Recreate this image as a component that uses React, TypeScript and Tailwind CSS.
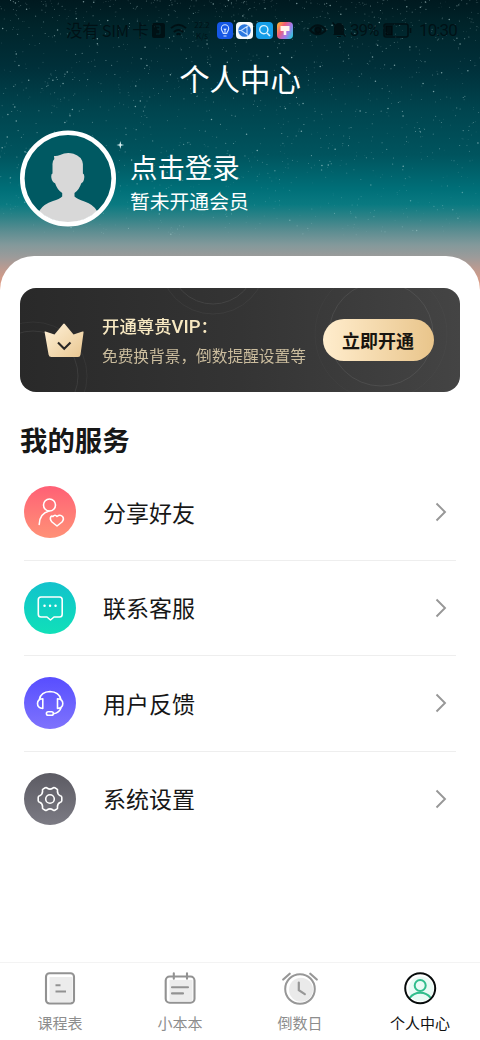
import type { ReactNode } from "react";

type Star = { x: number; y: number; r: number; o: number };

function makeStars(count: number): Star[] {
  let seed = 20231;
  const next = () => {
    seed = (seed * 16807) % 2147483647;
    return seed / 2147483647;
  };
  return Array.from({ length: count }, () => {
    const x = next() * 480;
    const y = Math.pow(next(), 1.45) * 235;
    const bright = next();
    return {
      x,
      y,
      r: bright > 0.93 ? 0.75 : 0.35 + next() * 0.25,
      o: (bright > 0.93 ? 0.6 : 0.18 + next() * 0.38) * (y > 170 ? 0.65 : 1),
    };
  });
}

const stars = makeStars(1500);

function NightSky() {
  return (
    <svg className="absolute inset-0 h-full w-full" viewBox="0 0 480 310" aria-hidden="true">
      <defs>
        <linearGradient id="sky" x1="0" y1="0" x2="0" y2="310" gradientUnits="userSpaceOnUse">
          <stop offset="0" stopColor="#00191f" />
          <stop offset="0.08" stopColor="#00242a" />
          <stop offset="0.22" stopColor="#00303a" />
          <stop offset="0.35" stopColor="#00444e" />
          <stop offset="0.5" stopColor="#00545e" />
          <stop offset="0.61" stopColor="#006f78" />
          <stop offset="0.66" stopColor="#0a7a81" />
          <stop offset="0.7" stopColor="#2e8287" />
          <stop offset="0.745" stopColor="#5b8d91" />
          <stop offset="0.79" stopColor="#83999b" />
          <stop offset="0.83" stopColor="#9c9b9a" />
          <stop offset="0.87" stopColor="#be9b90" />
          <stop offset="0.92" stopColor="#df9a82" />
          <stop offset="1" stopColor="#e79b7b" />
        </linearGradient>
      </defs>
      <rect width="480" height="310" fill="url(#sky)" />
      {stars.map((s, i) => (
        <circle key={i} cx={s.x} cy={s.y} r={s.r} fill="#c4e4e5" opacity={s.o} />
      ))}
      <path d="M120.3 141l.8 3.2 3 .8-3 .8-.8 3.2-.8-3.2-3-.8 3-.8z" fill="#d8f0f2" />
    </svg>
  );
}

function StatusBar() {
  return (
    <div className="relative flex h-[60px] items-center text-[#00090c]/70">
      <span className="ml-[66px] w-[84px] shrink-0 whitespace-nowrap text-[16.5px] leading-none tracking-[-0.3px]">没有 SIM 卡</span>
      <svg className="ml-[2px] shrink-0" width="13" height="15" viewBox="0 0 13 15">
        <rect width="13" height="15" rx="2" fill="currentColor" />
        <path d="M4 3h4v3H5m3 0v5H4" stroke="#00282e" fill="none" />
      </svg>
      <svg className="ml-[5px] shrink-0" width="17" height="15" viewBox="0 0 18 15" fill="none" stroke="currentColor" strokeWidth="2">
        <path d="M1 5q8-7 16 0M4 9q5-4 10 0M7 12q2-2 4 0" />
      </svg>
      <span className="ml-1 w-[22px] shrink-0 text-center text-[8px] leading-[11px]">22.2<br />K/s</span>
      <svg className="ml-[4px] shrink-0" width="16" height="17" viewBox="0 0 16 17">
        <rect width="16" height="17" rx="4" fill="#1557e5" />
        <path d="M6.3 11.5c0-1.6-2-2.4-2-5a3.7 3.7 0 0 1 7.4 0c0 2.6-2 3.4-2 5zM6.5 14h3M8 11V8L6.7 6.7M8 8l1.3-1.3" fill="none" stroke="#cfe2ff" strokeWidth="1.1" />
      </svg>
      <svg className="ml-[3px] shrink-0" width="17" height="17" viewBox="0 0 17 17">
        <rect width="17" height="17" rx="4" fill="#f6fafc" />
        <circle cx="8.5" cy="8.5" r="6.3" fill="#2b78df" />
        <path d="M5 8.5l6-4v8zM2.5 8.5H5M11 4.5l2-1M11 12.5l1 1" fill="none" stroke="#c7e0ff" strokeWidth="1.1" />
      </svg>
      <svg className="ml-[3px] shrink-0" width="17" height="17" viewBox="0 0 17 17">
        <rect width="17" height="17" rx="4" fill="#159ee8" />
        <circle cx="7.8" cy="7.7" r="4.1" fill="none" stroke="#d8f2ff" strokeWidth="1.4" />
        <path d="M11 11l3 3" stroke="#d8f2ff" strokeWidth="1.6" />
      </svg>
      <svg className="ml-[4px] shrink-0" width="16" height="17" viewBox="0 0 16 17">
        <defs>
          <linearGradient id="brush" x1="0" y1="0.2" x2="1" y2="0.8">
            <stop offset="0" stopColor="#ffac38" />
            <stop offset=".32" stopColor="#f05c78" />
            <stop offset=".65" stopColor="#a578eb" />
            <stop offset="1" stopColor="#30c5db" />
          </linearGradient>
        </defs>
        <rect width="16" height="17" rx="4" fill="url(#brush)" />
        <path d="M3.5 4h9v5H9.3v4H6.7V9H3.5z" fill="#fff5ed" />
      </svg>
      <svg className="ml-[16px] shrink-0" width="18" height="14" viewBox="0 0 19 14" fill="none" stroke="currentColor" strokeWidth="2">
        <path d="M1 7q8-10 17 0-9 9-17 0z" />
        <circle cx="9.5" cy="7" r="3" fill="currentColor" />
      </svg>
      <svg className="ml-[5px] shrink-0" width="14" height="16" viewBox="0 0 14 16">
        <path d="M2 12V6a5 5 0 0 1 10 0v6l1 1H1zM5 14h4v1H5zM0 1l1-1 13 14-1 1z" fill="currentColor" />
      </svg>
      <span className="ml-[4px] w-[30px] shrink-0 whitespace-nowrap font-[Roboto] text-[17px] leading-none tracking-[-1px]">39%</span>
      <svg className="ml-[3px] shrink-0" width="29" height="15" viewBox="0 0 29 15" fill="none" stroke="currentColor" strokeWidth="1.6">
        <rect x="1" y="1" width="24" height="13" rx="2" />
        <path d="M3 3h6v9H3z" fill="currentColor" />
        <path d="M27.5 5v5" />
      </svg>
      <span className="ml-[7px] font-[Roboto] text-[17px] leading-none tracking-[-0.9px]">10:30</span>
    </div>
  );
}

function Avatar() {
  return (
    <svg width="96" height="97" viewBox="0.5 0 96 97" className="shrink-0">
      <defs>
        <clipPath id="face">
          <circle cx="48.5" cy="48.5" r="44" />
        </clipPath>
      </defs>
      <circle cx="48.5" cy="48.5" r="45.7" fill="#005962" />
      <path
        clipPath="url(#face)"
        d="M34.5 26Q37.5 26.4 40.5 25Q47 21.8 54 23.8Q62.5 26.5 63.4 34V43.5Q65.2 44 64.7 48Q64.2 52.5 61.8 53.2Q59.5 60 55 63V66.5Q57.5 69 65 71.5Q74 74.5 77.5 81L81 97H16L20 80.5Q24 74 33.5 71Q40 69 42.7 66.5V63Q37.8 60 35.6 53.2Q32.5 52 31.9 48Q31.3 44 33 43.5V35Q32.7 31 34.8 29Z"
        fill="#d8d8d8"
      />
      <circle cx="48.5" cy="48.5" r="45.7" fill="none" stroke="#fff" strokeWidth="4.6" />
    </svg>
  );
}

function VipCard() {
  return (
    <section className="relative flex h-[104px] items-center overflow-hidden rounded-[16px] bg-linear-to-r from-[#292929] via-[#343434] to-[#444444]">
      <svg className="absolute inset-0" width="440" height="104" viewBox="0 0 440 104" fill="none" stroke="#fff">
        <g opacity=".08">
          <circle cx="13" cy="88" r="45" />
          <circle cx="13" cy="88" r="54" opacity=".6" />
          <circle cx="193" cy="-27" r="43" />
          <circle cx="193" cy="-27" r="53" opacity=".6" />
          <circle cx="361" cy="46" r="52" />
          <circle cx="361" cy="46" r="66" opacity=".3" />
        </g>
      </svg>
      <svg className="relative ml-6 shrink-0" width="40" height="35" viewBox="0 0 40 35">
        <defs>
          <linearGradient id="gold" x1="0" x2="1" y1="0" y2="1">
            <stop stopColor="#fff2d9" />
            <stop offset="1" stopColor="#e9c791" />
          </linearGradient>
        </defs>
        <path d="M.7 9.5Q0 8 1.5 8.5L10.5 11.5 19 1.2Q20 0 21 1.2L29.5 11.5 38.5 8.5Q40 8 39.5 9.7L36.5 31.8Q36.2 34 34 34H7.5Q5 34 4.6 31.8Z" fill="url(#gold)" />
        <path d="M14 19.5L20.2 25.7 26.5 19.5" fill="none" stroke="#292725" strokeWidth="2.1" />
      </svg>
      <div className="relative ml-[18px] whitespace-nowrap pt-0.5">
        <div className="text-[17.4px] font-medium leading-[24px] text-[#f8e9c2]">
          开通尊贵<span className="font-[Roboto] text-[18.5px]">VIP</span>：
        </div>
        <div className="mt-[5px] text-[15.7px] leading-[24px] text-[#cbbd9e]">免费换背景，倒数提醒设置等</div>
      </div>
      <button className="absolute left-[303px] top-[31px] h-[42px] w-[111px] rounded-full bg-linear-to-r from-[#ffedcd] to-[#e9c58b] pr-[1px] text-[18px] font-bold leading-none text-[#18140f]">
        立即开通
      </button>
    </section>
  );
}

const shareIcon = (
  <>
    <circle cx="25.5" cy="19" r="6" />
    <path d="M15.2 38.5Q15.5 27.5 25 25M29 30.5Q31 28 33 30.5Q36 28 38.5 30.5Q40.5 33 38 36L33 40L28 36Q25.3 33 27 30.5Q27.7 29.7 29 30.5" />
  </>
);

const chatIcon = (
  <>
    <path d="M17 15h18.5q2.7 0 2.7 2.7v14.6q0 2.7-2.7 2.7H30l-3.5 3L23 35h-6q-2.7 0-2.7-2.7V17.7Q14.3 15 17 15Z" />
    <path d="M20.5 23.8h.1M26 23.8h.1M31.5 23.8h.1" strokeWidth="2.4" />
  </>
);

const headsetIcon = (
  <>
    <path d="M15.5 22Q17 15 26 14.5Q35 15 36.8 22M18.8 21.7v9.8q-5.3-.3-5.3-4.9t5.3-4.9ZM33.5 21.7v9.8q5.3-.3 5.3-4.9t-5.3-4.9ZM37 31Q35 36 29.5 36.7" />
    <rect x="22.4" y="34.8" width="7" height="3.5" rx="1.75" />
  </>
);

const gearIcon = (
  <>
    <path d="M21.2 14.8Q22.5 14.2 23.3 15.3Q26 17 28.7 15.3Q29.5 14.2 30.8 14.8L33 16.1Q34 16.9 33.4 18.1Q33.5 21.7 36.3 22.8Q37.8 23.1 37.8 24.6V27.4Q37.8 28.9 36.3 29.2Q33.5 30.3 33.4 33.9Q34 35.1 33 35.9L30.8 37.2Q29.5 37.8 28.7 36.7Q26 35 23.3 36.7Q22.5 37.8 21.2 37.2L19 35.9Q18 35.1 18.6 33.9Q18.5 30.3 15.7 29.2Q14.2 28.9 14.2 27.4V24.6Q14.2 23.1 15.7 22.8Q18.5 21.7 18.6 18.1Q18 16.9 19 16.1Z" />
    <circle cx="26" cy="26" r="4.3" />
  </>
);

const services: { label: string; color: string; icon: ReactNode }[] = [
  { label: "分享好友", color: "from-[#ff5f75] to-[#ff9177]", icon: shareIcon },
  { label: "联系客服", color: "from-[#13c2cc] to-[#11e0b8]", icon: chatIcon },
  { label: "用户反馈", color: "from-[#584dff] to-[#7f72fc]", icon: headsetIcon },
  { label: "系统设置", color: "from-[#5c5b63] to-[#7c7b84]", icon: gearIcon },
];

const tabIcons: ReactNode[] = [
  <>
    <rect x="4" y="3.2" width="28" height="30.3" rx="3.5" fill="#fff" stroke="#929292" strokeWidth="2.1" />
    <path d="M7.5 7h23v25h-23z" fill="#ececec" />
    <path d="M13.5 15.2h5M13.5 21.6h10.5" stroke="#929292" strokeWidth="2" />
  </>,
  <>
    <rect x="3.7" y="6.5" width="28.8" height="26.3" rx="4" fill="#fff" stroke="#929292" strokeWidth="2.1" />
    <path d="M7.5 10h23v21h-23z" fill="#ececec" />
    <path d="M11.8 3.3v5.5M25 3.3v5.5M10 17.3h16M10 23.4h11" stroke="#929292" strokeWidth="2.1" strokeLinecap="round" />
  </>,
  <>
    <circle cx="18" cy="19" r="14.8" fill="#fff" stroke="#979797" strokeWidth="2" />
    <circle cx="19" cy="19.8" r="12" fill="#eaeaea" />
    <path d="M16.8 12.5v7.7l6 4M1.2 9.5L7.7 3.7M28.3 3.7L34.8 9.5" fill="none" stroke="#979797" strokeWidth="2.2" strokeLinecap="round" />
  </>,
  <>
    <circle cx="18.2" cy="18.3" r="15.2" fill="#fff" />
    <circle cx="19" cy="19" r="12.5" fill="#e9fbf5" />
    <circle cx="18.2" cy="15.5" r="5.5" fill="none" stroke="#30bd8c" strokeWidth="2" />
    <path d="M7.8 27.8Q11.5 22.7 18.2 22.7Q25 22.7 28.6 27.8" fill="none" stroke="#30bd8c" strokeWidth="2" />
    <circle cx="18.2" cy="18.3" r="15" fill="none" stroke="#070b0b" strokeWidth="2" />
  </>,
];

const tabs = ["课程表", "小本本", "倒数日", "个人中心"];

export default function App() {
  return (
    <div className="relative flex h-[1040px] w-[480px] flex-col overflow-hidden bg-white font-['Noto_Sans_CJK_SC',sans-serif] text-[#171717]">
      <header className="relative h-[310px] shrink-0 text-white">
        <NightSky />
        <StatusBar />
        <h1 className="relative -mt-px text-center text-[30.4px] leading-[38px]">个人中心</h1>
        <div className="relative mt-[33px] ml-5 flex">
          <Avatar />
          <div className="ml-[14px] pt-[18px] whitespace-nowrap">
            <div className="text-[27.4px] leading-[36px]">点击登录</div>
            <div className="mt-[2px] text-[19.8px] leading-[30px]">暂未开通会员</div>
          </div>
        </div>
      </header>
      <main className="relative -mt-[54px] h-[706px] shrink-0 rounded-t-[34px] bg-white px-5 pt-8">
        <VipCard />
        <h2 className="mt-[27px] h-[46px] text-[27.4px] font-bold leading-[40px]">我的服务</h2>
        <div className="mx-1">
          {services.map((service, i) => (
            <div
              key={service.label}
              className={`flex h-[95.5px] items-center border-b ${i < services.length - 1 ? "border-[#eeeeee]" : "border-transparent"}`}
            >
              <svg
                className={`shrink-0 rounded-full bg-linear-to-b ${service.color}`}
                width="52"
                height="52"
                viewBox="0 0 52 52"
                fill="none"
                stroke="#fff"
                strokeWidth="1.6"
                strokeLinejoin="round"
                strokeLinecap="round"
              >
                {service.icon}
              </svg>
              <span className="ml-[27px] grow pb-px text-[23px] leading-[34px]">{service.label}</span>
              <svg className="mr-[9px]" width="12" height="20" viewBox="0 0 12 20" fill="none" stroke="#979797" strokeWidth="1.9">
                <path d="M1.5 1.5L10 10L1.5 18.5" />
              </svg>
            </div>
          ))}
        </div>
      </main>
      <nav className="relative grid h-[78px] shrink-0 grid-cols-4 border-t border-[#f3f3f3] bg-white pt-[7px]">
        {tabs.map((tab, i) => (
          <div key={tab} className="flex flex-col items-center">
            <svg width="36" height="36" viewBox="0 0 36 36">{tabIcons[i]}</svg>
            <span className={`mt-[7px] text-[15px] leading-[20px] ${i === 3 ? "text-[#111111]" : "text-[#8d8d8d]"}`}>{tab}</span>
          </div>
        ))}
      </nav>
    </div>
  );
}
